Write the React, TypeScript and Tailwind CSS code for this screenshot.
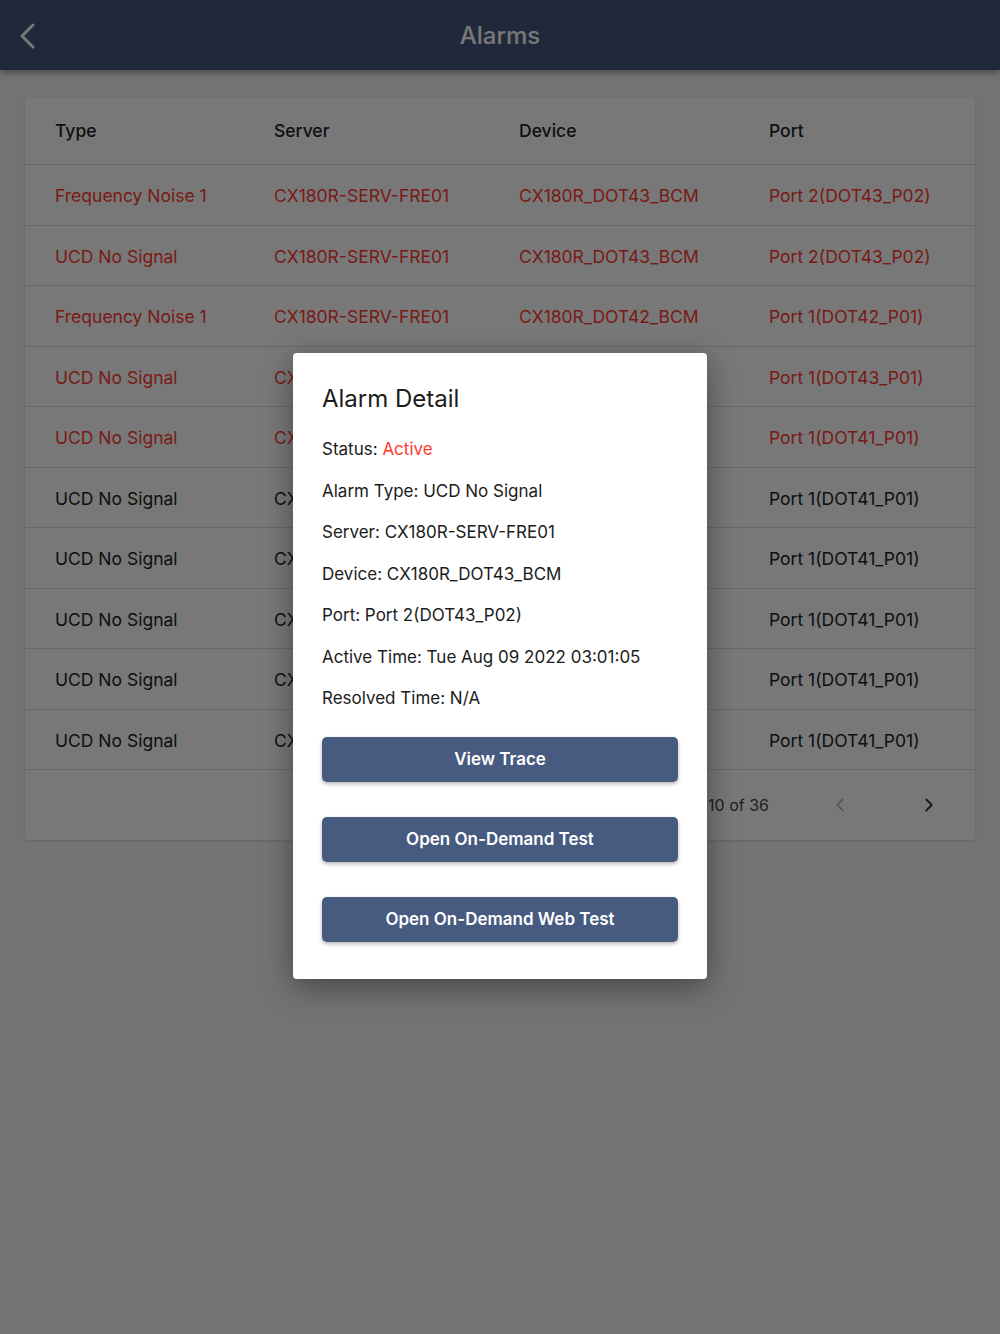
import { ChevronLeft, ChevronRight } from "lucide-react";

type Row = {
  type: string;
  server: string;
  device: string;
  port: string;
  active: boolean;
};

const rows: Row[] = [
  { type: "Frequency Noise 1", server: "CX180R-SERV-FRE01", device: "CX180R_DOT43_BCM", port: "Port 2(DOT43_P02)", active: true },
  { type: "UCD No Signal", server: "CX180R-SERV-FRE01", device: "CX180R_DOT43_BCM", port: "Port 2(DOT43_P02)", active: true },
  { type: "Frequency Noise 1", server: "CX180R-SERV-FRE01", device: "CX180R_DOT42_BCM", port: "Port 1(DOT42_P01)", active: true },
  { type: "UCD No Signal", server: "CX180R-SERV-FRE01", device: "CX180R_DOT43_BCM", port: "Port 1(DOT43_P01)", active: true },
  { type: "UCD No Signal", server: "CX180R-SERV-FRE01", device: "CX180R_DOT41_BCM", port: "Port 1(DOT41_P01)", active: true },
  { type: "UCD No Signal", server: "CX180R-SERV-FRE01", device: "CX180R_DOT41_BCM", port: "Port 1(DOT41_P01)", active: false },
  { type: "UCD No Signal", server: "CX180R-SERV-FRE01", device: "CX180R_DOT41_BCM", port: "Port 1(DOT41_P01)", active: false },
  { type: "UCD No Signal", server: "CX180R-SERV-FRE01", device: "CX180R_DOT41_BCM", port: "Port 1(DOT41_P01)", active: false },
  { type: "UCD No Signal", server: "CX180R-SERV-FRE01", device: "CX180R_DOT41_BCM", port: "Port 1(DOT41_P01)", active: false },
  { type: "UCD No Signal", server: "CX180R-SERV-FRE01", device: "CX180R_DOT41_BCM", port: "Port 1(DOT41_P01)", active: false },
];

const details = [
  "Alarm Type: UCD No Signal",
  "Server: CX180R-SERV-FRE01",
  "Device: CX180R_DOT43_BCM",
  "Port: Port 2(DOT43_P02)",
  "Active Time: Tue Aug 09 2022 03:01:05",
  "Resolved Time: N/A",
];

function ActionButton({ label }: { label: string }) {
  return (
    <button className="h-[45px] w-full rounded-[5px] bg-[#475a7f] text-[17px] font-semibold text-white shadow-[0_2px_4px_rgba(0,0,0,0.3)]">
      {label}
    </button>
  );
}

export default function App() {
  return (
    <div
      className="relative min-h-[1334px] w-[1000px] bg-[#f5f5f5]"
      style={{ fontFamily: "Inter, Roboto, sans-serif" }}
    >
      <header className="relative z-10 flex h-[70px] items-center justify-center bg-[#44577f] shadow-[0_3px_6px_rgba(0,0,0,0.35)]">
        {/* back chevron */}
        <svg
          className="absolute left-[17px] top-[22px]"
          width="22"
          height="28"
          viewBox="0 0 22 28"
          fill="none"
          stroke="white"
          strokeWidth="3"
          strokeLinecap="round"
          strokeLinejoin="round"
        >
          <polyline points="16,3 5,14 16,25" />
        </svg>
        <h1 className="mt-[2px] text-[24px] font-medium text-white">Alarms</h1>
      </header>

      <div className="px-[25px] pt-[27px]">
        <div className="rounded-[4px] bg-white shadow-[0_1px_3px_rgba(0,0,0,0.15)]">
          <div className="grid h-[68px] grid-cols-[219px_245px_250px_1fr] items-center border-b border-[#dcdcdc] pl-[30px] pt-[2px] text-[17.5px] font-medium text-[#222]">
            <div>Type</div>
            <div>Server</div>
            <div>Device</div>
            <div>Port</div>
          </div>
          {rows.map((r, i) => (
            <div
              key={i}
              className={`grid h-[60.5px] grid-cols-[219px_245px_250px_1fr] items-center border-b border-[#dcdcdc] pl-[30px] pt-[3px] text-[17.5px] ${
                r.active ? "text-[#ff3b30]" : "text-[#222]"
              }`}
            >
              <div>{r.type}</div>
              <div>{r.server}</div>
              <div>{r.device}</div>
              <div>{r.port}</div>
            </div>
          ))}
          <div className="flex h-[70px] items-center justify-end pr-[35px] text-[16px] text-[#444]">
            <span>1-10 of 36</span>
            <ChevronLeft className="ml-[60px] h-[22px] w-[22px] text-[#bbb]" strokeWidth={2} />
            <ChevronRight className="ml-[67px] h-[22px] w-[22px] text-[#333]" strokeWidth={2} />
          </div>
        </div>
      </div>

      <div className="absolute inset-0 z-20 bg-black/[0.53]" />

      <div className="absolute left-[293px] top-[353px] z-30 w-[414px] rounded-[4px] bg-white px-[29px] pb-[37px] pt-[29px] shadow-[0_8px_30px_rgba(0,0,0,0.4)]">
        <h2 className="text-[24px] font-normal leading-[34px] text-[#1c1c1c]">Alarm Detail</h2>
        <div className="mt-[21px] flex flex-col gap-[17.5px] text-[17px] leading-[24px] text-[#1c1c1c]">
          <div>
            Status: <span className="text-[#ff3b30]">Active</span>
          </div>
          {details.map((d) => (
            <div key={d}>{d}</div>
          ))}
        </div>
        <div className="mt-[27px] flex flex-col gap-[35px]">
          <ActionButton label="View Trace" />
          <ActionButton label="Open On-Demand Test" />
          <ActionButton label="Open On-Demand Web Test" />
        </div>
      </div>
    </div>
  );
}
